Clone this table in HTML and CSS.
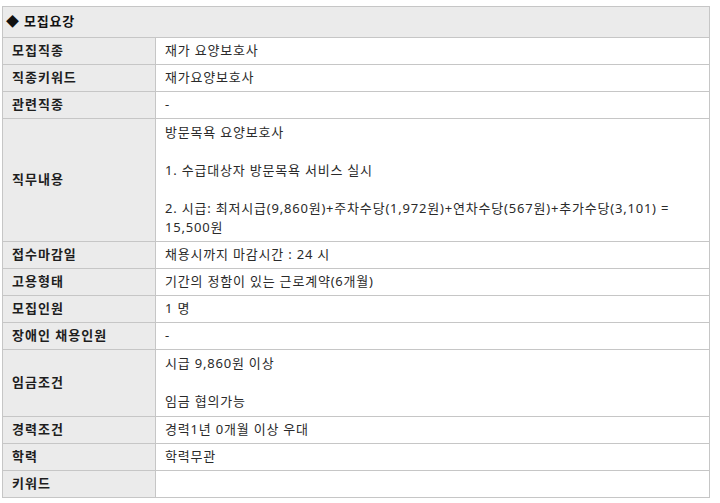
FILE: index.html
```html
<!DOCTYPE html>
<html lang="ko">
<head>
<meta charset="utf-8">
<link rel="stylesheet" href="styles.css">
</head>
<body>
<table class="recruit">
  <colgroup><col class="c-label"><col class="c-value"></colgroup>
  <thead>
    <tr><th colspan="2" class="title">◆ 모집요강</th></tr>
  </thead>
  <tbody>
    <tr><th>모집직종</th><td>재가 요양보호사</td></tr>
    <tr><th>직종키워드</th><td>재가요양보호사</td></tr>
    <tr><th>관련직종</th><td>-</td></tr>
    <tr class="multi"><th>직무내용</th><td>방문목욕 요양보호사<br><br>1. 수급대상자 방문목욕 서비스 실시<br><br>2. 시급: 최저시급(9,860원)+주차수당(1,972원)+연차수당(567원)+추가수당(3,101) = 15,500원</td></tr>
    <tr><th>접수마감일</th><td>채용시까지 마감시간 : 24 시</td></tr>
    <tr><th>고용형태</th><td>기간의 정함이 있는 근로계약(6개월)</td></tr>
    <tr><th>모집인원</th><td>1 명</td></tr>
    <tr><th>장애인 채용인원</th><td>-</td></tr>
    <tr class="multi wage"><th>임금조건</th><td>시급 9,860원 이상<br><br>임금 협의가능</td></tr>
    <tr><th>경력조건</th><td>경력1년 0개월 이상 우대</td></tr>
    <tr><th>학력</th><td>학력무관</td></tr>
    <tr><th>키워드</th><td></td></tr>
  </tbody>
</table>
</body>
</html>
```
FILE: styles.css
```css
html, body {
  margin: 0;
  padding: 0;
  background: #ffffff;
}
body {
  padding: 6px 0 0 2px;
  font-family: "Noto Sans", "Noto Sans CJK KR", sans-serif;
  font-size: 13px;
  color: #333333;
}
.recruit {
  border-collapse: collapse;
  width: 708px;
  table-layout: fixed;
}
.c-label { width: 153px; }
.recruit th, .recruit td {
  border: 1px solid #c6c6c6;
  line-height: 19px;
  padding: 3px 9px 4px 9px;
  text-align: left;
  vertical-align: middle;
}
.recruit th {
  background: #ebebeb;
  color: #1e1e1e;
  font-weight: bold;
  letter-spacing: 1px;
}
.recruit td {
  background: #ffffff;
  color: #2a2a2a;
  letter-spacing: 0.8px;
}
.recruit .title {
  padding: 5px 4px 6px 3px;
  color: #111111;
  letter-spacing: 0.8px;
}
.recruit tr.multi td {
  padding-top: 4px;
  padding-bottom: 4px;
}
.recruit tr.wage td {
  padding-bottom: 5px;
}
```
